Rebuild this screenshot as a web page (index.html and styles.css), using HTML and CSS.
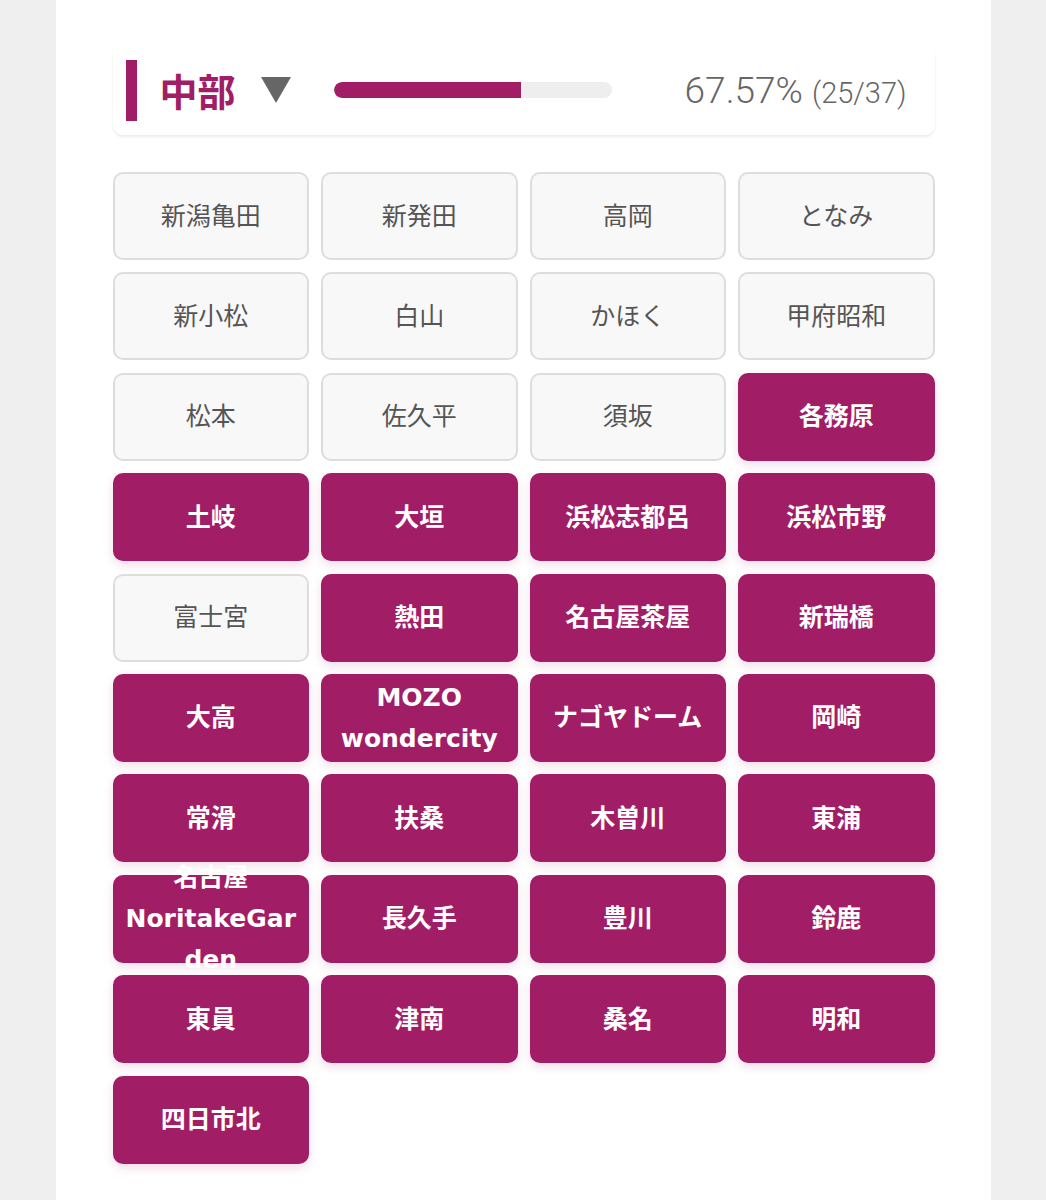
FILE: index.html
```html
<!DOCTYPE html>
<html lang="ja">
<head>
    <meta charset="UTF-8">
    <meta name="viewport" content="width=device-width, initial-scale=1.0">
    <title>中部</title>
    <link rel="stylesheet" href="styles.css">
</head>
<body>

<div class="page">
    <div class="region-header">
        <span class="region-mark"></span>
        <h2 class="region-name">中部</h2>
        <span class="region-toggle"></span>
        <div class="progress">
            <div class="progress-fill" style="width: 67.57%"></div>
        </div>
        <p class="progress-text">67.57% <small>(25/37)</small></p>
    </div>

    <div class="store-grid">
        <button class="store">新潟亀田</button>
        <button class="store">新発田</button>
        <button class="store">高岡</button>
        <button class="store">となみ</button>
        <button class="store">新小松</button>
        <button class="store">白山</button>
        <button class="store">かほく</button>
        <button class="store">甲府昭和</button>
        <button class="store">松本</button>
        <button class="store">佐久平</button>
        <button class="store">須坂</button>
        <button class="store visited">各務原</button>
        <button class="store visited">土岐</button>
        <button class="store visited">大垣</button>
        <button class="store visited">浜松志都呂</button>
        <button class="store visited">浜松市野</button>
        <button class="store">富士宮</button>
        <button class="store visited">熱田</button>
        <button class="store visited">名古屋茶屋</button>
        <button class="store visited">新瑞橋</button>
        <button class="store visited">大高</button>
        <button class="store visited">MOZO wondercity</button>
        <button class="store visited">ナゴヤドーム</button>
        <button class="store visited">岡崎</button>
        <button class="store visited">常滑</button>
        <button class="store visited">扶桑</button>
        <button class="store visited">木曽川</button>
        <button class="store visited">東浦</button>
        <button class="store visited">名古屋NoritakeGarden</button>
        <button class="store visited">長久手</button>
        <button class="store visited">豊川</button>
        <button class="store visited">鈴鹿</button>
        <button class="store visited">東員</button>
        <button class="store visited">津南</button>
        <button class="store visited">桑名</button>
        <button class="store visited">明和</button>
        <button class="store visited">四日市北</button>
    </div>
</div>

</body>
</html>
```

FILE: styles.css
```css
body {
    margin: 0;
    padding: 0;
    background-color: #efefef;
    font-family: "Noto Sans CJK JP", sans-serif;
}
.page {
    background-color: #ffffff;
    width: 935px;
    min-height: 1300px;
    margin: 0 auto;
    padding: 45px 56px 40px 57px;
    box-sizing: border-box;
}
.region-header {
    display: flex;
    align-items: center;
    height: 90px;
    padding: 0 28px 0 13px;
    border-radius: 10px;
    box-shadow: 0 2px 3px rgba(0, 0, 0, 0.08);
}
.region-mark {
    width: 11px;
    height: 61px;
    background-color: #a11d65;
}
.region-name {
    margin: 0 0 0 23px;
    font-size: 38px;
    font-weight: bold;
    color: #a11d65;
    line-height: 1;
}
.region-toggle {
    margin-left: 25px;
    width: 0;
    height: 0;
    border-left: 15px solid transparent;
    border-right: 15px solid transparent;
    border-top: 26px solid #666666;
}
.progress {
    margin-left: 43px;
    width: 278px;
    height: 16px;
    border-radius: 8px;
    background-color: #eeeeee;
    overflow: hidden;
}
.progress-fill {
    height: 100%;
    background-color: #a11d65;
    border-radius: 8px 0 0 8px;
}
.progress-text {
    margin: 0 0 0 auto;
    font-family: Roboto, "Liberation Sans", sans-serif;
    font-weight: 300;
    font-size: 37px;
    color: #666666;
    line-height: 1;
}
.progress-text small {
    font-size: 29px;
}
.store-grid {
    display: grid;
    grid-template-columns: repeat(4, minmax(0, 1fr));
    column-gap: 12px;
    row-gap: 12.4px;
    margin-top: 37px;
}
.store {
    min-width: 0;
    height: 88px;
    display: flex;
    align-items: center;
    justify-content: center;
    padding: 0 8px;
    background-color: #f8f8f8;
    border: 2px solid #dddddd;
    border-radius: 10px;
    color: #555555;
    font-family: "DejaVu Sans", "Noto Sans CJK JP", sans-serif;
    font-size: 25px;
    line-height: 41px;
    text-align: center;
    overflow: visible;
    overflow-wrap: anywhere;
    cursor: pointer;
}
.store.visited {
    background-color: #a11d65;
    border-color: #a11d65;
    color: #ffffff;
    font-weight: bold;
    box-shadow: 0 4px 10px rgba(161, 29, 101, 0.15);
}
```
